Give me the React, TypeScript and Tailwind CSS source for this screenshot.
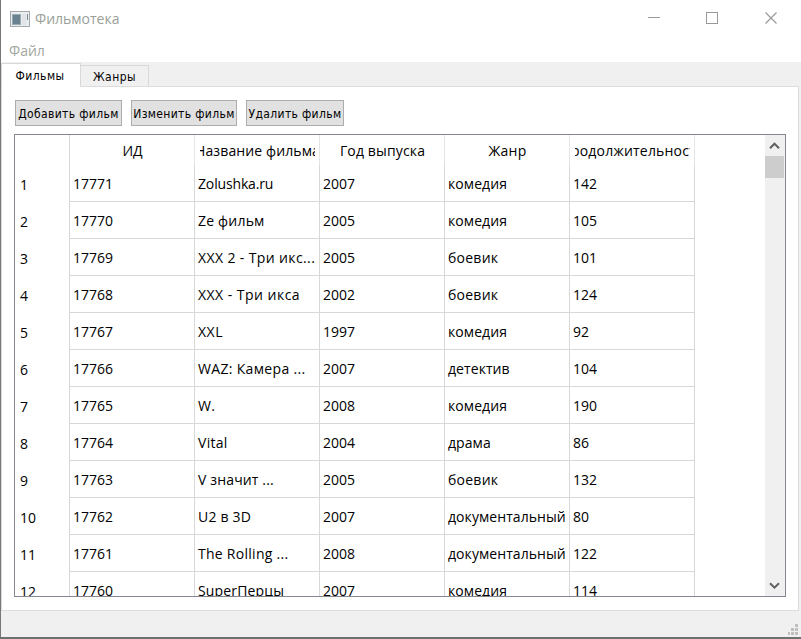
import React from 'react';

const films: string[][] = [
  ['17771', 'Zolushka.ru', '2007', 'комедия', '142'],
  ['17770', 'Ze фильм', '2005', 'комедия', '105'],
  ['17769', 'XXX 2 - Три икс...', '2005', 'боевик', '101'],
  ['17768', 'XXX - Три икса', '2002', 'боевик', '124'],
  ['17767', 'XXL', '1997', 'комедия', '92'],
  ['17766', 'WAZ: Камера ...', '2007', 'детектив', '104'],
  ['17765', 'W.', '2008', 'комедия', '190'],
  ['17764', 'Vital', '2004', 'драма', '86'],
  ['17763', 'V значит ...', '2005', 'боевик', '132'],
  ['17762', 'U2 в 3D', '2007', 'документальный', '80'],
  ['17761', 'The Rolling ...', '2008', 'документальный', '122'],
  ['17760', 'SuperПерцы', '2007', 'комедия', '114'],
];

// Letter spacing of the film titles, row by row
const titleTracking = [
  'tracking-[-0.15px]',
  'tracking-[0.2px]',
  'tracking-[0.38px]',
  'tracking-[0.47px]',
  'tracking-[0.5px]',
  'tracking-[0.33px]',
  'tracking-[0.2px]',
  'tracking-[0.3px]',
  'tracking-[0.15px]',
  'tracking-[0.2px]',
  'tracking-[0.27px]',
  'tracking-[0.15px]',
];

const headers = [
  { text: 'ИД', tracking: '' },
  { text: 'Название фильма', tracking: 'tracking-[0.12px]' },
  { text: 'Год выпуска', tracking: 'tracking-[0.15px]' },
  { text: 'Жанр', tracking: 'tracking-[0.3px]' },
  { text: 'Продолжительность', tracking: 'tracking-[0.2px]' },
];

function TitleBar() {
  return (
    <header className="flex h-[37px] shrink-0 items-center pl-[9px] text-[#999f99]">
      <svg width="20" height="16" viewBox="0 0 20 16" className="shrink-0" shapeRendering="crispEdges">
        <rect width="20" height="16" fill="#a5a8aa" />
        <rect x="1" y="1" width="18" height="14" fill="#e9edef" />
        <rect x="2" y="3" width="9" height="11" fill="#9aaab3" />
        <rect x="3" y="4" width="7" height="9" fill="#6a8290" />
        <rect x="12" y="3" width="4" height="11" fill="#e0e4e8" />
        <rect x="17" y="3" width="1" height="6" fill="#79868f" />
      </svg>
      <span className="ml-[5px] grow text-[14px] leading-5">Фильмотека</span>
      <svg width="130" height="14" viewBox="0 0 130 14" className="mr-[23px] -mt-px" fill="none" stroke="#999999">
        <path d="M0 6.5H12" />
        <rect x="58.5" y="1.5" width="11" height="11" />
        <path d="M117.5 1.5l11 11M128.5 1.5l-11 11" strokeWidth="1.2" />
      </svg>
    </header>
  );
}

function ToolButton({ label, width }: { label: string; width: string }) {
  return (
    <button className={`flex h-[26px] items-center justify-center whitespace-nowrap border border-[#adadad] bg-[#e1e1e1] pt-px tracking-[0.36px] ${width}`}>
      {label}
    </button>
  );
}

function FilmTable() {
  return (
    <div className="flex h-[463px] w-[772px] overflow-hidden border border-[#828790] text-[14px] leading-5">
      <div className="w-[54px] shrink-0 pt-[30px]">
        {films.map((_, i) => (
          <div key={i} className="h-[37px] pl-[5px] pt-[10px]">{i + 1}</div>
        ))}
      </div>
      <div className="w-[626px] shrink-0 border-l border-[#d8d8d8]">
        <div className="flex h-[30px]">
          {headers.map((h) => (
            <div key={h.text} className="flex w-[125px] border-r border-[#e5e5e5] pl-[5px] pr-1 pt-[6px]">
              <div className="flex w-full justify-center overflow-hidden whitespace-nowrap">
                <span className={`shrink-0 ${h.tracking}`}>{h.text}</span>
              </div>
            </div>
          ))}
        </div>
        {films.map((row, r) => (
          <div key={row[0]} className="flex h-[37px]">
            {row.map((cell, i) => (
              <div
                key={i}
                className={`w-[125px] whitespace-nowrap border-b border-r border-[#d8d8d8] pl-[3px] pt-[9px] ${
                  i === 1 ? titleTracking[r] : i === 3 ? (cell === 'боевик' ? 'tracking-[0.25px]' : 'tracking-[0.07px]') : ''
                }`}
              >
                {cell}
              </div>
            ))}
          </div>
        ))}
      </div>
      <div className="grow" />
      <div className="flex w-[20px] shrink-0 flex-col bg-[#f0f0f0]">
        <svg width="20" height="21" viewBox="0 0 20 21" fill="none" stroke="#606060" strokeWidth="2">
          <path d="M5 13.2l4.5-4.5 4.5 4.5" />
        </svg>
        <div className="h-[22px] w-[19px] bg-[#cdcdcd]" />
        <div className="grow" />
        <svg width="20" height="21" viewBox="0 0 20 21" fill="none" stroke="#606060" strokeWidth="2">
          <path d="M5 8.2l4.5 4.5 4.5-4.5" />
        </svg>
      </div>
    </div>
  );
}

export default function App() {
  return (
    <div className="flex h-[639px] w-[801px] flex-col overflow-hidden border-b-2 border-l border-b-[#707070] border-l-[#777777] bg-[#f0f0f0] font-['Open_Sans','Noto_Sans',sans-serif] text-black">
      <div className="h-[62px] shrink-0 bg-white">
        <TitleBar />
        <div className="pl-[8px] pt-[4px] text-[14px] leading-5 text-[#a3a8a0]">Файл</div>
      </div>
      <nav className="flex h-[24px] shrink-0 items-end font-['DejaVu_Sans_Condensed','DejaVu_Sans',sans-serif] text-[12px] tracking-[0.45px]">
        <div className="z-10 -mb-px flex h-[24px] w-[80px] items-center justify-center border border-b-0 border-[#d9d9d9] bg-white pr-[2px]">Фильмы</div>
        <div className="flex h-[21px] w-[68px] items-center justify-center border border-b-0 border-l-0 border-[#d9d9d9] bg-[#f0f0f0] pt-px">Жанры</div>
      </nav>
      <main className="h-[525px] w-[798px] shrink-0 border border-[#dcdcdc] bg-white pl-[12px] pt-[13px]">
        <div className="mb-[8px] flex gap-[9px] pl-px font-['DejaVu_Sans_Condensed','DejaVu_Sans',sans-serif] text-[12px]">
          <ToolButton label="Добавить фильм" width="w-[107px]" />
          <ToolButton label="Изменить фильм" width="w-[106px]" />
          <ToolButton label="Удалить фильм" width="w-[98px]" />
        </div>
        <FilmTable />
      </main>
      <footer className="flex grow items-end justify-end pb-[2px] pr-[3px]">
        <svg width="10" height="11" viewBox="0 0 10 11" fill="#bfbfbf" shapeRendering="crispEdges">
          <path d="M7 0h3v3H7zM3 4h3v3H3zM7 4h3v3H7zM0 8h2v3H0zM3 8h3v3H3zM7 8h3v3H7z" />
        </svg>
      </footer>
    </div>
  );
}
